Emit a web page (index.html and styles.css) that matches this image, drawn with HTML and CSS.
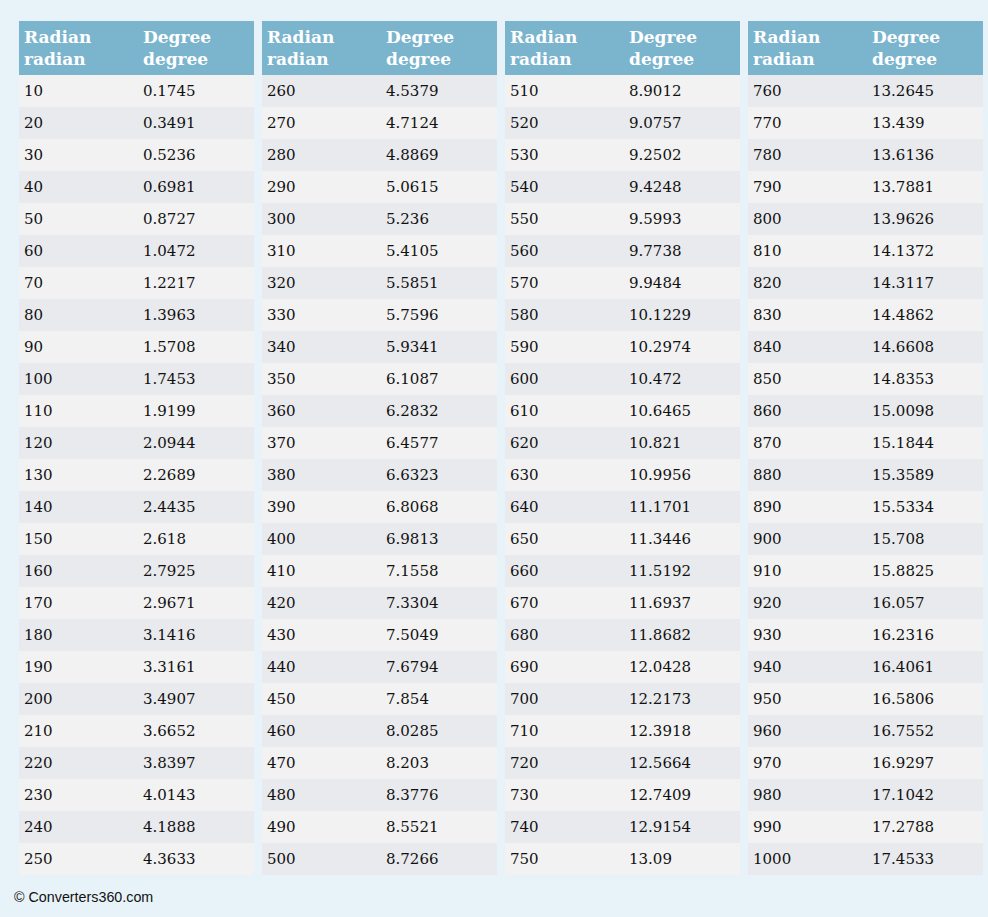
FILE: index.html
```html
<!DOCTYPE html>
<html>
<head>
<meta charset="utf-8">
<link rel="stylesheet" href="styles.css">
</head>
<body>
<div class="tables">
<table class="conv">
<thead><tr><th class="c1">Radian<br>radian</th><th class="c2">Degree<br>degree</th></tr></thead>
<tbody>
<tr><td>10</td><td>0.1745</td></tr>
<tr><td>20</td><td>0.3491</td></tr>
<tr><td>30</td><td>0.5236</td></tr>
<tr><td>40</td><td>0.6981</td></tr>
<tr><td>50</td><td>0.8727</td></tr>
<tr><td>60</td><td>1.0472</td></tr>
<tr><td>70</td><td>1.2217</td></tr>
<tr><td>80</td><td>1.3963</td></tr>
<tr><td>90</td><td>1.5708</td></tr>
<tr><td>100</td><td>1.7453</td></tr>
<tr><td>110</td><td>1.9199</td></tr>
<tr><td>120</td><td>2.0944</td></tr>
<tr><td>130</td><td>2.2689</td></tr>
<tr><td>140</td><td>2.4435</td></tr>
<tr><td>150</td><td>2.618</td></tr>
<tr><td>160</td><td>2.7925</td></tr>
<tr><td>170</td><td>2.9671</td></tr>
<tr><td>180</td><td>3.1416</td></tr>
<tr><td>190</td><td>3.3161</td></tr>
<tr><td>200</td><td>3.4907</td></tr>
<tr><td>210</td><td>3.6652</td></tr>
<tr><td>220</td><td>3.8397</td></tr>
<tr><td>230</td><td>4.0143</td></tr>
<tr><td>240</td><td>4.1888</td></tr>
<tr><td>250</td><td>4.3633</td></tr>
</tbody>
</table>
<table class="conv flip">
<thead><tr><th class="c1">Radian<br>radian</th><th class="c2">Degree<br>degree</th></tr></thead>
<tbody>
<tr><td>260</td><td>4.5379</td></tr>
<tr><td>270</td><td>4.7124</td></tr>
<tr><td>280</td><td>4.8869</td></tr>
<tr><td>290</td><td>5.0615</td></tr>
<tr><td>300</td><td>5.236</td></tr>
<tr><td>310</td><td>5.4105</td></tr>
<tr><td>320</td><td>5.5851</td></tr>
<tr><td>330</td><td>5.7596</td></tr>
<tr><td>340</td><td>5.9341</td></tr>
<tr><td>350</td><td>6.1087</td></tr>
<tr><td>360</td><td>6.2832</td></tr>
<tr><td>370</td><td>6.4577</td></tr>
<tr><td>380</td><td>6.6323</td></tr>
<tr><td>390</td><td>6.8068</td></tr>
<tr><td>400</td><td>6.9813</td></tr>
<tr><td>410</td><td>7.1558</td></tr>
<tr><td>420</td><td>7.3304</td></tr>
<tr><td>430</td><td>7.5049</td></tr>
<tr><td>440</td><td>7.6794</td></tr>
<tr><td>450</td><td>7.854</td></tr>
<tr><td>460</td><td>8.0285</td></tr>
<tr><td>470</td><td>8.203</td></tr>
<tr><td>480</td><td>8.3776</td></tr>
<tr><td>490</td><td>8.5521</td></tr>
<tr><td>500</td><td>8.7266</td></tr>
</tbody>
</table>
<table class="conv">
<thead><tr><th class="c1">Radian<br>radian</th><th class="c2">Degree<br>degree</th></tr></thead>
<tbody>
<tr><td>510</td><td>8.9012</td></tr>
<tr><td>520</td><td>9.0757</td></tr>
<tr><td>530</td><td>9.2502</td></tr>
<tr><td>540</td><td>9.4248</td></tr>
<tr><td>550</td><td>9.5993</td></tr>
<tr><td>560</td><td>9.7738</td></tr>
<tr><td>570</td><td>9.9484</td></tr>
<tr><td>580</td><td>10.1229</td></tr>
<tr><td>590</td><td>10.2974</td></tr>
<tr><td>600</td><td>10.472</td></tr>
<tr><td>610</td><td>10.6465</td></tr>
<tr><td>620</td><td>10.821</td></tr>
<tr><td>630</td><td>10.9956</td></tr>
<tr><td>640</td><td>11.1701</td></tr>
<tr><td>650</td><td>11.3446</td></tr>
<tr><td>660</td><td>11.5192</td></tr>
<tr><td>670</td><td>11.6937</td></tr>
<tr><td>680</td><td>11.8682</td></tr>
<tr><td>690</td><td>12.0428</td></tr>
<tr><td>700</td><td>12.2173</td></tr>
<tr><td>710</td><td>12.3918</td></tr>
<tr><td>720</td><td>12.5664</td></tr>
<tr><td>730</td><td>12.7409</td></tr>
<tr><td>740</td><td>12.9154</td></tr>
<tr><td>750</td><td>13.09</td></tr>
</tbody>
</table>
<table class="conv flip">
<thead><tr><th class="c1">Radian<br>radian</th><th class="c2">Degree<br>degree</th></tr></thead>
<tbody>
<tr><td>760</td><td>13.2645</td></tr>
<tr><td>770</td><td>13.439</td></tr>
<tr><td>780</td><td>13.6136</td></tr>
<tr><td>790</td><td>13.7881</td></tr>
<tr><td>800</td><td>13.9626</td></tr>
<tr><td>810</td><td>14.1372</td></tr>
<tr><td>820</td><td>14.3117</td></tr>
<tr><td>830</td><td>14.4862</td></tr>
<tr><td>840</td><td>14.6608</td></tr>
<tr><td>850</td><td>14.8353</td></tr>
<tr><td>860</td><td>15.0098</td></tr>
<tr><td>870</td><td>15.1844</td></tr>
<tr><td>880</td><td>15.3589</td></tr>
<tr><td>890</td><td>15.5334</td></tr>
<tr><td>900</td><td>15.708</td></tr>
<tr><td>910</td><td>15.8825</td></tr>
<tr><td>920</td><td>16.057</td></tr>
<tr><td>930</td><td>16.2316</td></tr>
<tr><td>940</td><td>16.4061</td></tr>
<tr><td>950</td><td>16.5806</td></tr>
<tr><td>960</td><td>16.7552</td></tr>
<tr><td>970</td><td>16.9297</td></tr>
<tr><td>980</td><td>17.1042</td></tr>
<tr><td>990</td><td>17.2788</td></tr>
<tr><td>1000</td><td>17.4533</td></tr>
</tbody>
</table>
</div>
<div class="footer">© Converters360.com</div>
</body>
</html>
```
FILE: styles.css
```css
html, body {
  margin: 0;
  padding: 0;
  background: #e8f3f9;
}
body {
  width: 988px;
  height: 917px;
  overflow: hidden;
}
.tables {
  display: flex;
  gap: 8px;
  padding: 21px 0 0 19px;
}
.conv {
  width: 235px;
  flex: 0 0 235px;
  border-collapse: collapse;
  border-spacing: 0;
  table-layout: fixed;
  font-family: "DejaVu Serif", "Liberation Serif", serif;
  color: #111;
}
.conv .c1 { width: 109px; }
.conv th {
  background: #7bb4cd;
  color: #fff;
  font-weight: bold;
  font-size: 17px;
  line-height: 22px;
  height: 44px;
  padding: 5px;
  text-align: left;
  vertical-align: middle;
}
.conv td {
  font-size: 15px;
  line-height: 22px;
  height: 22px;
  padding: 5px;
  text-align: left;
  vertical-align: middle;
}
.conv tbody tr:nth-child(odd) { background: #f2f2f2; }
.conv tbody tr:nth-child(even) { background: #e9eaed; }
.conv.flip tbody tr:nth-child(odd) { background: #e9eaed; }
.conv.flip tbody tr:nth-child(even) { background: #f2f2f2; }
.footer {
  margin: 14px 0 0 14px;
  font-family: "Liberation Sans", Arial, sans-serif;
  font-size: 14.3px;
  line-height: 16px;
  color: #111;
}
```
